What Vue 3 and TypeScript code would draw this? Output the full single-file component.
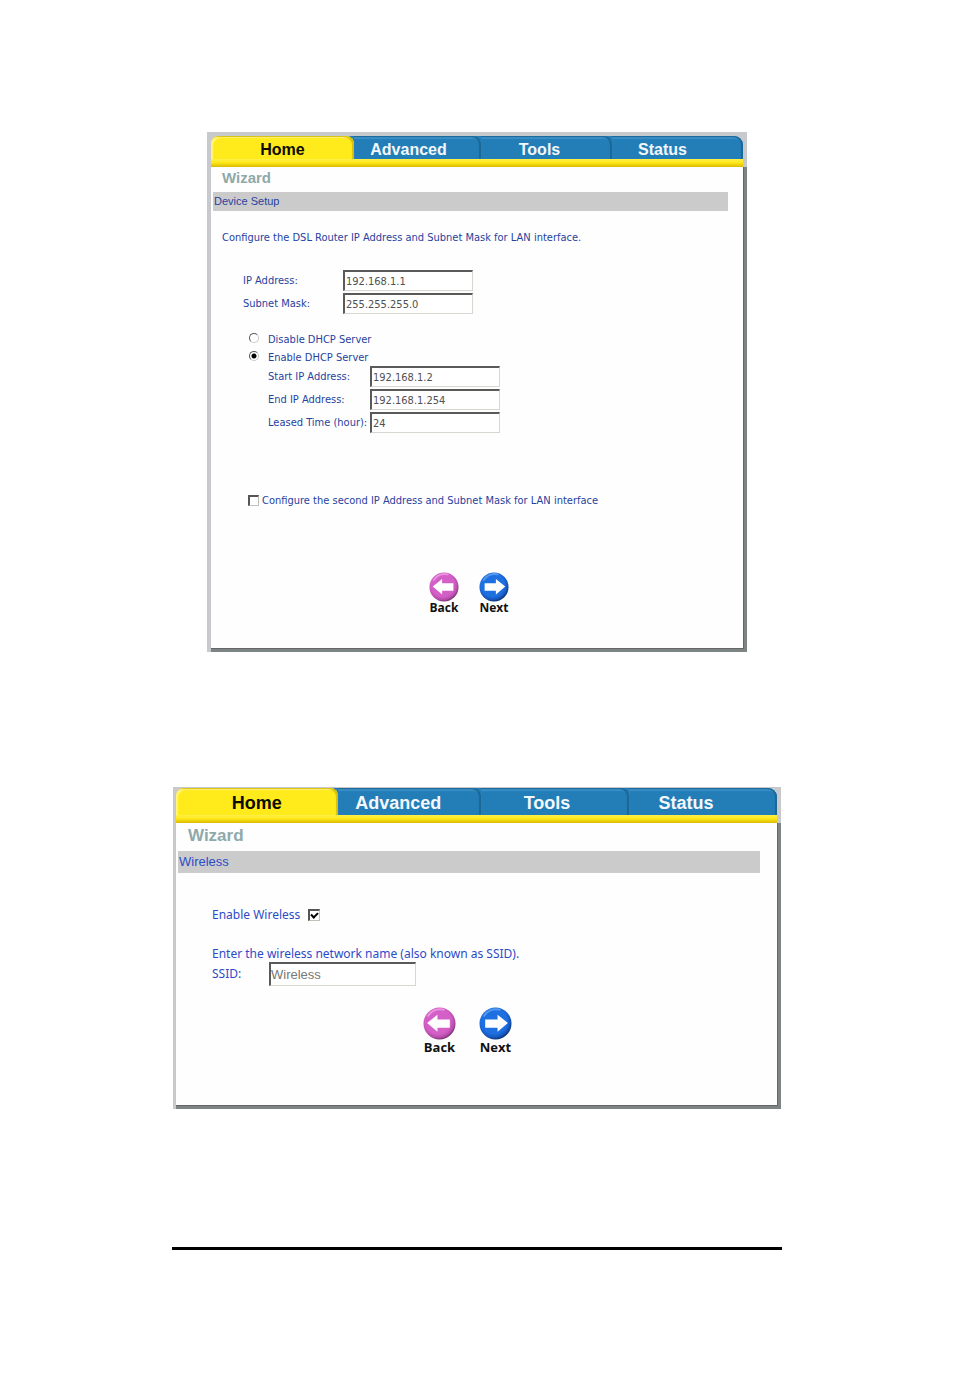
<script setup lang="ts">
import { ref } from 'vue'

const tabs: string[] = ['Home', 'Advanced', 'Tools', 'Status']

const ipAddress = ref('192.168.1.1')
const subnetMask = ref('255.255.255.0')
const dhcp = ref<'disable' | 'enable'>('enable')
const startIp = ref('192.168.1.2')
const endIp = ref('192.168.1.254')
const leasedTime = ref('24')
const secondIp = ref(false)

const wirelessEnabled = ref(true)
const ssid = ref('Wireless')
</script>

<template>
  <main class="page">
    <section class="panel device">
      <nav class="tabs">
        <a v-for="(tab, i) in tabs" :key="tab" href="#" class="tab" :class="[`tab-${i}`, { active: i === 0 }]">{{ tab }}</a>
      </nav>
      <div class="strip"></div>
      <div class="body">
        <h1 class="title">Wizard</h1>
        <h2 class="bar">Device Setup</h2>
        <p class="intro">Configure the DSL Router IP Address and Subnet Mask for LAN interface.</p>

        <div class="fields lan">
          <label for="ip">IP Address:</label>
          <input id="ip" v-model="ipAddress" class="text" type="text" />
          <label for="mask">Subnet Mask:</label>
          <input id="mask" v-model="subnetMask" class="text" type="text" />
        </div>

        <div class="choices">
          <label class="choice"><input v-model="dhcp" class="radio" type="radio" name="dhcp" value="disable" />Disable DHCP Server</label>
          <label class="choice"><input v-model="dhcp" class="radio" type="radio" name="dhcp" value="enable" />Enable DHCP Server</label>
        </div>

        <div class="fields pool">
          <label for="start">Start IP Address:</label>
          <input id="start" v-model="startIp" class="text" type="text" />
          <label for="end">End IP Address:</label>
          <input id="end" v-model="endIp" class="text" type="text" />
          <label for="lease">Leased Time (hour):</label>
          <input id="lease" v-model="leasedTime" class="text" type="text" />
        </div>

        <label class="second"><input v-model="secondIp" class="check" type="checkbox" />Configure the second IP Address and Subnet Mask for LAN interface</label>

        <div class="actions">
          <button class="action" type="button">
            <svg viewBox="0 0 32 32" aria-hidden="true">
              <defs>
                <radialGradient id="pink-a" cx="0.45" cy="0.42" r="0.58">
                  <stop offset="0.7" stop-color="#d45fc6" />
                  <stop offset="0.88" stop-color="#b94dac" />
                  <stop offset="1" stop-color="#7d3577" />
                </radialGradient>
              </defs>
              <circle cx="16" cy="16" r="15.500" fill="url(#pink-a)" />
              <path d="M5 8.500A13.500 13.500 0 0 1 20 2.600" fill="none" stroke="#e793dd" stroke-width="2" stroke-linecap="round" />
              <path d="M4 15.500 14 7.500v4.500H26v8H14v4z" fill="#fff" />
            </svg>
            <span>Back</span>
          </button>
          <button class="action" type="button">
            <svg viewBox="0 0 32 32" aria-hidden="true">
              <defs>
                <radialGradient id="blue-a" cx="0.45" cy="0.42" r="0.58">
                  <stop offset="0.7" stop-color="#1e6fe0" />
                  <stop offset="0.88" stop-color="#1557bd" />
                  <stop offset="1" stop-color="#0b3478" />
                </radialGradient>
              </defs>
              <circle cx="16" cy="16" r="15.500" fill="url(#blue-a)" />
              <path d="M5 8.500A13.500 13.500 0 0 1 20 2.600" fill="none" stroke="#5598ee" stroke-width="2" stroke-linecap="round" />
              <path d="M28 15.500 18 7.500v4.500H6v8h12v4z" fill="#fff" />
            </svg>
            <span>Next</span>
          </button>
        </div>
      </div>
    </section>

    <section class="panel wireless">
      <nav class="tabs">
        <a v-for="(tab, i) in tabs" :key="tab" href="#" class="tab" :class="[`tab-${i}`, { active: i === 0 }]">{{ tab }}</a>
      </nav>
      <div class="strip"></div>
      <div class="body">
        <h1 class="title">Wizard</h1>
        <h2 class="bar">Wireless</h2>

        <div class="enable">
          <label for="wifi">Enable Wireless</label>
          <input id="wifi" v-model="wirelessEnabled" class="check" type="checkbox" />
        </div>
        <p class="prompt">Enter the wireless network name (also known as SSID).</p>
        <div class="fields net">
          <label for="ssid">SSID:</label>
          <input id="ssid" v-model="ssid" class="text" type="text" />
        </div>

        <div class="actions">
          <button class="action" type="button">
            <svg viewBox="0 0 32 32" aria-hidden="true">
              <circle cx="16" cy="16" r="15.500" fill="url(#pink-a)" />
              <path d="M5 8.500A13.500 13.500 0 0 1 20 2.600" fill="none" stroke="#e793dd" stroke-width="2" stroke-linecap="round" />
              <path d="M4 15.500 14 7.500v4.500H26v8H14v4z" fill="#fff" />
            </svg>
            <span>Back</span>
          </button>
          <button class="action" type="button">
            <svg viewBox="0 0 32 32" aria-hidden="true">
              <circle cx="16" cy="16" r="15.500" fill="url(#blue-a)" />
              <path d="M5 8.500A13.500 13.500 0 0 1 20 2.600" fill="none" stroke="#5598ee" stroke-width="2" stroke-linecap="round" />
              <path d="M28 15.500 18 7.500v4.500H6v8h12v4z" fill="#fff" />
            </svg>
            <span>Next</span>
          </button>
        </div>
      </div>
    </section>

    <hr class="rule" />
  </main>
</template>

<style>
body {
  margin: 0;
  background: #fff;
}
</style>

<style scoped>
.page {
  box-sizing: border-box;
  max-width: 610px;
  margin: 0 auto;
  padding: 132px 0;
  display: flex;
  flex-direction: column;
  align-items: center;
  font-family: 'DejaVu Sans Condensed', 'DejaVu Sans', sans-serif;
}

.panel {
  box-sizing: border-box;
  width: 100%;
  background: #c8c9cd;
}

.device {
  max-width: 540px;
  padding: 4px 4px 0;
  font-size: 11px;
  line-height: 19px;
  color: #2642a0;
}

.wireless {
  max-width: 608px;
  margin-top: 135px;
  padding: 1px 4px 0 3px;
  font-family: 'Noto Sans', sans-serif;
  font-size: 12px;
  line-height: 20px;
  color: #2d4bc8;
}

/* Tab strip */
.tabs {
  display: grid;
  grid-template-columns: 143fr 127fr 131fr 131fr;
  border-radius: 0 9px 0 0;
  background: linear-gradient(to right, #c8c9cd 20px, #237eb8 20px);
  overflow: hidden;
}

.tab {
  box-sizing: border-box;
  height: 23px;
  text-align: center;
  text-decoration: none;
  font: bold 16px/27px 'Liberation Sans', Arial, sans-serif;
  color: #f4f8fb;
  background: #237eb8;
  border-radius: 0 8px 0 0;
  box-shadow: inset -2px 1px 1px #1b6796, inset 0 3px 1px #3b90c6;
}

.tab-1 { padding-right: 18px; }
.tab-2 { padding-right: 14px; }
.tab-3 { padding-right: 30px; }

.tab.active {
  color: #0c0c00;
  background: #ffeb1c;
  border-radius: 8px 8px 0 0;
  box-shadow: inset -2px 1px 1px #d9bd0c, inset 2px 2px 1px #fff47c;
}

.wireless .tab {
  height: 27px;
  font-size: 18px;
  line-height: 30px;
}

.wireless .tab-1 { padding-right: 22px; }
.wireless .tab-2 { padding-right: 16px; }
.wireless .tab-3 { padding-right: 34px; }

.strip {
  height: 8px;
  background: linear-gradient(#fff04a, #ffe81a 45%, #e8cc08 80%, #dcba10);
}

.body {
  margin-right: -4px;
  background: #fefefe;
  border-right: 3px solid #7d8585;
  border-bottom: 3px solid #7d8484;
  box-shadow: inset -1px -1px 0 #666;
}

.device .body { padding-bottom: 35px; }
.wireless .body { padding-bottom: 52px; }

.title {
  margin: 0;
  padding: 1px 0 0 11px;
  font: bold 15px/20px 'Liberation Sans', Arial, sans-serif;
  color: #8ea9aa;
}

.wireless .title {
  padding: 1px 0 0 12px;
  font-size: 17px;
  line-height: 24px;
}

.bar {
  margin: 4px 16px 0 2px;
  padding-left: 1px;
  font: normal 11px/19px 'Liberation Sans', Arial, sans-serif;
  background: #cbcbcb;
}

.wireless .bar {
  margin: 3px 18px 0 2px;
  font-size: 13px;
  line-height: 22px;
}

.intro {
  margin: 17px 0 0 11px;
}

/* Label and text box pairs */
.fields {
  display: grid;
  align-items: center;
  row-gap: 2px;
}

.fields label {
  white-space: nowrap;
}

.lan {
  grid-template-columns: 100px 130px;
  margin: 23px 0 0 32px;
}

.pool {
  grid-template-columns: 102px 130px;
  margin-left: 57px;
}

.net {
  grid-template-columns: 57px 147px;
  margin-left: 36px;
}

.text {
  box-sizing: border-box;
  width: 100%;
  height: 21px;
  padding: 0 1px;
  border: 1px solid #d8d6d0;
  border-top: 2px solid #5a5a5a;
  border-left: 2px solid #5a5a5a;
  border-radius: 0;
  outline: none;
  background: #fff;
  color: #505050;
  font: inherit;
}

.net .text {
  height: 24px;
  padding: 0;
  font: 13px 'Liberation Sans', Arial, sans-serif;
  color: #777;
}

/* Radios and tick boxes */
.choices {
  display: grid;
  margin: 16px 0 0 38px;
}

.choice {
  display: flex;
  align-items: center;
  height: 18px;
}

.radio {
  appearance: none;
  box-sizing: border-box;
  width: 10px;
  height: 10px;
  margin: 0 9px 2px 0;
  border: 1px solid #c8c8c8;
  border-top-color: #555;
  border-left-color: #555;
  border-radius: 50%;
  background: #fff;
}

.radio:checked {
  background: radial-gradient(circle, #000 2px, #fff 3px);
}

.check {
  appearance: none;
  box-sizing: border-box;
  width: 11px;
  height: 11px;
  margin: 0;
  border: 1px solid #c4c0b8;
  border-top: 2px solid #555;
  border-left: 2px solid #555;
  background: #fff;
}

.second {
  display: flex;
  align-items: center;
  gap: 3px;
  margin: 58px 0 0 37px;
}

.enable {
  display: flex;
  align-items: center;
  gap: 8px;
  margin: 32px 0 0 36px;
}

.enable .check {
  display: grid;
  width: 12px;
  height: 12px;
}

.enable .check:checked::after {
  content: '';
  width: 5px;
  height: 3px;
  margin: 1px;
  border: solid #000;
  border-width: 0 0 2px 2px;
  transform: rotate(-45deg);
}

.prompt {
  margin: 21px 0 0 36px;
  line-height: 16px;
}

/* Back and Next */
.actions {
  display: flex;
  gap: 20px;
  margin: 62px 0 0 218px;
}

.wireless .actions {
  gap: 23px;
  margin: 21px 0 0 247px;
}

.action {
  display: flex;
  flex-direction: column;
  align-items: center;
  width: 30px;
  padding: 0;
  border: 0;
  background: none;
  color: #111;
  font: 700 12px/12px 'Open Sans', sans-serif;
  cursor: pointer;
}

.action svg {
  width: 30px;
  height: 30px;
}

.wireless .action {
  width: 33px;
  font-size: 13px;
  line-height: 14px;
}

.wireless .action svg {
  width: 33px;
  height: 33px;
}

.rule {
  width: 100%;
  height: 3px;
  margin: 138px 0 0;
  border: 0;
  background: #000;
}
</style>
